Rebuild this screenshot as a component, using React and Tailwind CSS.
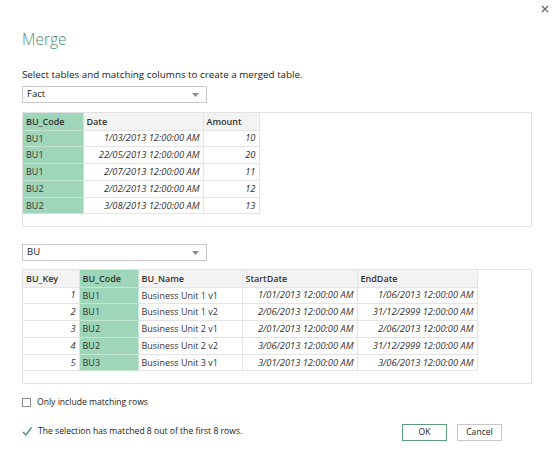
import { useState } from "react";

const factRows = [
  ["BU1", "1/03/2013 12:00:00 AM", "10"],
  ["BU1", "22/05/2013 12:00:00 AM", "20"],
  ["BU1", "2/07/2013 12:00:00 AM", "11"],
  ["BU2", "2/02/2013 12:00:00 AM", "12"],
  ["BU2", "3/08/2013 12:00:00 AM", "13"],
];

const buRows = [
  ["1", "BU1", "Business Unit 1 v1", "1/01/2013 12:00:00 AM", "1/06/2013 12:00:00 AM"],
  ["2", "BU1", "Business Unit 1 v2", "2/06/2013 12:00:00 AM", "31/12/2999 12:00:00 AM"],
  ["3", "BU2", "Business Unit 2 v1", "2/01/2013 12:00:00 AM", "2/06/2013 12:00:00 AM"],
  ["4", "BU2", "Business Unit 2 v2", "3/06/2013 12:00:00 AM", "31/12/2999 12:00:00 AM"],
  ["5", "BU3", "Business Unit 3 v1", "3/01/2013 12:00:00 AM", "3/06/2013 12:00:00 AM"],
];

function Dropdown({ label }) {
  return (
    <div className="flex items-center justify-between w-[185px] h-[17px] border border-[#c8c8c8] pl-[4px] pr-[7px] text-[9.5px] text-[#222]">
      <span>{label}</span>
      <svg width="7" height="4" viewBox="0 0 7 4"><path d="M0 0h7L3.5 4z" fill="#8a8a8a" /></svg>
    </div>
  );
}

// th / td helpers, green = the selected matching column
function Th({ children, green, w }) {
  return (
    <th className={"h-[17px] px-[3px] text-left font-semibold border-r border-b " + (green ? "bg-[#9fd5b8] border-[#c4e6d3]" : "bg-[#f3f3f3] border-[#e4e4e4]")} style={{ width: w }}>
      {children}
    </th>
  );
}

function Td({ children, green, num }) {
  return (
    <td className={"h-[16.8px] px-[3px] border-r border-b whitespace-nowrap overflow-hidden " + (green ? "bg-[#9fd5b8] border-[#c4e6d3]" : "border-[#e4e4e4]") + (num ? " text-right italic text-[9.3px]" : "")}>
      {children}
    </td>
  );
}

export default function App() {
  const [onlyMatching, setOnlyMatching] = useState(false);

  return (
    <div className="w-[554px] h-[466px] bg-white px-[22px] font-['Open_Sans',sans-serif] text-[#333] overflow-hidden">
      <div className="flex justify-end h-[29px] pt-[5px] -mr-[17px]">
        <svg width="8" height="8" viewBox="0 0 8 8"><path d="M1 1l6 6M7 1L1 7" stroke="#666" strokeWidth="1.3" /></svg>
      </div>
      <h1 className="text-[15.5px] leading-[20px] font-light text-[#4e8c78]">Merge</h1>
      <p className="mt-[19px] text-[9.8px] leading-[14px] text-[#222]">Select tables and matching columns to create a merged table.</p>

      <div className="mt-[4px]">
        <Dropdown label="Fact" />
      </div>
      <div className="mt-[9px] h-[115px] border border-[#e2e2e2] text-[9px]">
        <table className="border-collapse table-fixed">
          <thead>
            <tr>
              <Th green w="60px">BU_Code</Th>
              <Th w="120px">Date</Th>
              <Th w="56px">Amount</Th>
            </tr>
          </thead>
          <tbody>
            {factRows.map((r, i) => (
              <tr key={i}>
                <Td green>{r[0]}</Td>
                <Td num>{r[1]}</Td>
                <Td num>{r[2]}</Td>
              </tr>
            ))}
          </tbody>
        </table>
      </div>

      <div className="mt-[17px]">
        <Dropdown label="BU" />
      </div>
      <div className="mt-[8px] h-[115px] border border-[#e2e2e2] text-[9px]">
        <table className="border-collapse table-fixed">
          <thead>
            <tr>
              <Th w="56px">BU_Key</Th>
              <Th green w="59px">BU_Code</Th>
              <Th w="104px">BU_Name</Th>
              <Th w="115px">StartDate</Th>
              <Th w="120px">EndDate</Th>
            </tr>
          </thead>
          <tbody>
            {buRows.map((r, i) => (
              <tr key={i}>
                <Td num>{r[0]}</Td>
                <Td green>{r[1]}</Td>
                <Td>{r[2]}</Td>
                <Td num>{r[3]}</Td>
                <Td num>{r[4]}</Td>
              </tr>
            ))}
          </tbody>
        </table>
      </div>

      <label className="mt-[11px] flex items-center gap-[6px] text-[8.6px] leading-[14px] text-[#222] cursor-pointer w-fit">
        <span
          className="w-[9px] h-[9px] border border-[#8c8c8c] bg-white flex items-center justify-center"
          onClick={() => setOnlyMatching(!onlyMatching)}
        >
          {onlyMatching && <svg width="7" height="7" viewBox="0 0 8 8"><path d="M1 4l2 2 4-5" stroke="#333" fill="none" /></svg>}
        </span>
        Only include matching rows
      </label>

      <div className="mt-[15px] flex items-start justify-between mr-[30px]">
        <div className="flex items-center gap-[6px] text-[8.6px] leading-[14px] text-[#222]">
          <svg width="10" height="9" viewBox="0 0 10 9"><path d="M1 5l3 3 5.5-7.5" stroke="#3f9a6b" strokeWidth="1.4" fill="none" /></svg>
          The selection has matched 8 out of the first 8 rows.
        </div>
        <div className="flex gap-[10px]">
          <button className="w-[45px] h-[17px] border border-[#5a9e7b] text-[8.6px] text-[#222] bg-white">OK</button>
          <button className="w-[45px] h-[17px] border border-[#c8c8c8] text-[8.6px] text-[#222] bg-white">Cancel</button>
        </div>
      </div>
    </div>
  );
}
